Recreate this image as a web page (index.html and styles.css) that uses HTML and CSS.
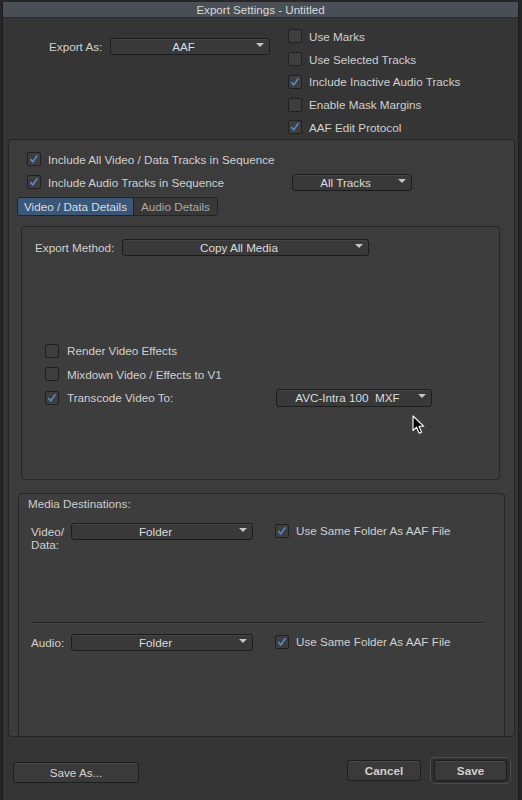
FILE: index.html
```html
<!DOCTYPE html>
<html>
<head>
<meta charset="utf-8">
<title>Export Settings</title>
<link rel="stylesheet" href="styles.css">
</head>
<body>
<div class="window">
  <div class="titlebar">Export Settings - Untitled</div>

  <div class="top">
    <div class="export-as">
      <span class="lbl lbl-export">Export As:</span>
      <div class="select sel-aaf"><span class="sel-text">AAF</span><span class="arrow"></span></div>
    </div>
    <div class="top-checks">
      <div class="row"><span class="cb"></span><span class="lbl">Use Marks</span></div>
      <div class="row"><span class="cb"></span><span class="lbl">Use Selected Tracks</span></div>
      <div class="row"><span class="cb on"><svg viewBox="0 0 14 14"><path d="M3.2 7.6 L5.6 10.4 L10.6 3.2"/></svg></span><span class="lbl">Include Inactive Audio Tracks</span></div>
      <div class="row"><span class="cb"></span><span class="lbl">Enable Mask Margins</span></div>
      <div class="row"><span class="cb on"><svg viewBox="0 0 14 14"><path d="M3.2 7.6 L5.6 10.4 L10.6 3.2"/></svg></span><span class="lbl">AAF Edit Protocol</span></div>
    </div>
  </div>

  <div class="group">
    <div class="seq-rows">
      <div class="row"><span class="cb on"><svg viewBox="0 0 14 14"><path d="M3.2 7.6 L5.6 10.4 L10.6 3.2"/></svg></span><span class="lbl">Include All Video / Data Tracks in Sequence</span></div>
      <div class="row">
        <span class="cb on"><svg viewBox="0 0 14 14"><path d="M3.2 7.6 L5.6 10.4 L10.6 3.2"/></svg></span><span class="lbl lbl-audio-seq">Include Audio Tracks in Sequence</span>
        <div class="select sel-tracks"><span class="sel-text">All Tracks</span><span class="arrow"></span></div>
      </div>
    </div>

    <div class="tabs">
      <div class="tab active">Video / Data Details</div>
      <div class="tab">Audio Details</div>
    </div>

    <div class="panel">
      <div class="method-row">
        <span class="lbl lbl-method">Export Method:</span>
        <div class="select sel-method"><span class="sel-text">Copy All Media</span><span class="arrow"></span></div>
      </div>
      <div class="video-checks">
        <div class="row row-v"><span class="cb"></span><span class="lbl">Render Video Effects</span></div>
        <div class="row row-v"><span class="cb"></span><span class="lbl">Mixdown Video / Effects to V1</span></div>
        <div class="row row-v">
          <span class="cb on"><svg viewBox="0 0 14 14"><path d="M3.2 7.6 L5.6 10.4 L10.6 3.2"/></svg></span><span class="lbl lbl-transcode">Transcode Video To:</span>
          <div class="select sel-avc"><span class="sel-text">AVC-Intra 100&nbsp; MXF</span><span class="arrow"></span></div>
        </div>
      </div>
    </div>

    <div class="media">
      <div class="media-title">Media Destinations:</div>
      <div class="dest-row dest-video">
        <span class="dest-lbl">Video/<br>Data:</span>
        <div class="select sel-folder"><span class="sel-text">Folder</span><span class="arrow"></span></div>
        <span class="cb on"><svg viewBox="0 0 14 14"><path d="M3.2 7.6 L5.6 10.4 L10.6 3.2"/></svg></span><span class="lbl">Use Same Folder As AAF File</span>
      </div>
      <div class="sep"></div>
      <div class="dest-row dest-audio">
        <span class="dest-lbl">Audio:</span>
        <div class="select sel-folder"><span class="sel-text">Folder</span><span class="arrow"></span></div>
        <span class="cb on"><svg viewBox="0 0 14 14"><path d="M3.2 7.6 L5.6 10.4 L10.6 3.2"/></svg></span><span class="lbl">Use Same Folder As AAF File</span>
      </div>
    </div>
  </div>

  <div class="footer">
    <div class="btn btn-saveas">Save As...</div>
    <div class="spacer"></div>
    <div class="btn btn-cancel">Cancel</div>
    <div class="default-ring"><div class="btn btn-save">Save</div></div>
  </div>
</div>

<svg class="cursor" viewBox="0 0 13 20" width="13" height="20">
  <path d="M1 1 L1 15.5 L4.6 12.2 L7.2 18.2 L9.6 17.2 L7 11.3 L11.8 11.3 Z" fill="#000" stroke="#fff" stroke-width="1.1" stroke-linejoin="round"/>
</svg>
</body>
</html>
```

FILE: styles.css
```css
* { box-sizing: border-box; }

html, body {
  margin: 0;
  padding: 0;
  width: 522px;
  height: 800px;
  overflow: hidden;
  background: #262626;
  font-family: "Liberation Sans", Arial, sans-serif;
  font-size: 11.7px;
  color: #d0d0d0;
}

.window {
  margin: 2px 0 0 2px;
  width: 517px;
  height: 798px;
  background: #353535;
  border-left: 1px solid #1c1c1c;
  border-right: 1px solid #1c1c1c;
  display: flex;
  flex-direction: column;
}

.titlebar {
  height: 16px;
  line-height: 16px;
  background: #4a4f56;
  border-bottom: 1px solid #2a2c2f;
  text-align: center;
  color: #d8d8d8;
  font-size: 11.6px;
  flex: none;
}

/* top section */
.top {
  height: 121px;
  display: flex;
  flex: none;
  padding-left: 46px;
}
.export-as {
  display: flex;
  align-items: center;
  gap: 7px;
  width: 221px;
  height: 17px;
  margin-top: 20px;
}
.lbl-export { width: 54px; white-space: nowrap; }

.top-checks {
  margin-left: 18px;
  padding-top: 7px;
}

.row {
  display: flex;
  align-items: center;
  height: 22.75px;
  gap: 7px;
  white-space: nowrap;
}

.lbl { white-space: nowrap; }

/* checkbox */
.cb {
  flex: none;
  width: 14px;
  height: 14px;
  border: 1px solid #202020;
  border-radius: 2px;
  background: #3e3e3e;
  display: flex;
  align-items: center;
  justify-content: center;
}
.cb svg { width: 14px; height: 14px; }
.cb svg path {
  fill: none;
  stroke: #5b8fd4;
  stroke-width: 1.7;
  stroke-linecap: round;
  stroke-linejoin: round;
}

/* select */
.select {
  flex: none;
  display: flex;
  height: 17px;
  background: #393939;
  border: 1px solid #1d1d1d;
  border-radius: 3px;
  box-shadow: inset 0 1px 0 #444;
  color: #dcdcdc;
}
.sel-text {
  flex: 1;
  text-align: center;
  line-height: 15px;
  white-space: nowrap;
}
.arrow {
  flex: none;
  width: 0;
  height: 0;
  margin: 4px 5px 0 0;
  border-left: 4px solid transparent;
  border-right: 4px solid transparent;
  border-top: 4px solid #c4c4c4;
}
.sel-aaf { width: 160px; }
.sel-tracks { width: 120px; }
.sel-method { width: 247px; }
.sel-avc { width: 156px; height: 18px; }
.sel-folder { width: 182px; }

/* group */
.group {
  flex: none;
  margin-left: 5px;
  width: 507px;
  height: 598px;
  background: #3c3c3c;
  border: 1px solid #252525;
  border-radius: 4px;
  overflow: hidden;
  display: flex;
  flex-direction: column;
}
.group > * { flex: none; }
.seq-rows {
  padding: 7.5px 0 0 18px;
}
.seq-rows .row { height: 23px; }
.lbl-audio-seq { width: 237px; }

.tabs {
  display: flex;
  margin: 3.5px 0 0 8px;
  height: 19px;
  width: 201px;
  border: 1px solid #232323;
  border-radius: 3px;
  overflow: hidden;
}
.tab {
  line-height: 17px;
  text-align: center;
  color: #a9a9a9;
  background: #383838;
  white-space: nowrap;
}
.tab.active {
  width: 116px;
  background: #3a5777;
  color: #d8dde3;
  border-right: 1px solid #232323;
}
.tab:last-child { flex: 1; }

.panel {
  margin: 10px 0 0 12px;
  width: 479px;
  height: 254px;
  border: 1px solid #262626;
  border-radius: 4px;
  background: #3d3d3d;
}
.method-row {
  display: flex;
  align-items: center;
  gap: 7px;
  padding: 12px 0 0 13px;
}
.lbl-method { width: 80px; white-space: nowrap; }

.video-checks {
  margin-top: 83px;
  padding-left: 23px;
}
.row-v { height: 23.5px; gap: 8px; }
.lbl-transcode { width: 201px; }

.media {
  margin: 13px 0 0 9px;
  width: 487px;
  height: 260px;
  border: 1px solid #262626;
  border-radius: 4px;
  background: #3d3d3d;
}
.media-title {
  padding: 3px 0 0 9px;
  line-height: 14px;
  color: #cdcdcd;
}
.dest-row {
  display: flex;
  align-items: flex-start;
  padding-left: 12px;
}
.dest-video { margin-top: 12px; height: 99px; }
.dest-audio { margin-top: 11px; }
.dest-lbl {
  width: 40px;
  flex: none;
  line-height: 13px;
  margin-top: 2px;
}
.dest-row .cb { margin: 1px 0 0 22px; }
.dest-row .lbl { margin-left: 7px; line-height: 16px; }

.sep {
  margin-left: 13px;
  width: 453px;
  height: 1px;
  background: #262626;
  box-shadow: 0 1px 0 #464646;
}

/* footer */
.footer {
  flex: 1;
  display: flex;
  align-items: flex-start;
  padding: 0 7px 0 10px;
}
.spacer { flex: 1; }
.btn {
  height: 21px;
  line-height: 19px;
  text-align: center;
  font-weight: bold;
  color: #d0d0d0;
  background: #3a3a3a;
  border: 1px solid #1e1e1e;
  border-radius: 3px;
  box-shadow: inset 0 1px 0 #464646;
}
.btn-saveas { width: 126px; margin-top: 25px; font-weight: normal; color: #d4d4d4; }
.btn-cancel { width: 74px; margin-top: 23px; }
.default-ring {
  margin: 20px 0 0 9px;
  width: 81px;
  height: 27px;
  border: 1px solid #4e4e4e;
  border-radius: 5px;
  padding: 2px 3px;
  background: #2e2e2e;
}
.btn-save { width: 73px; }

.cursor {
  position: absolute;
  left: 412px;
  top: 415px;
}
```
